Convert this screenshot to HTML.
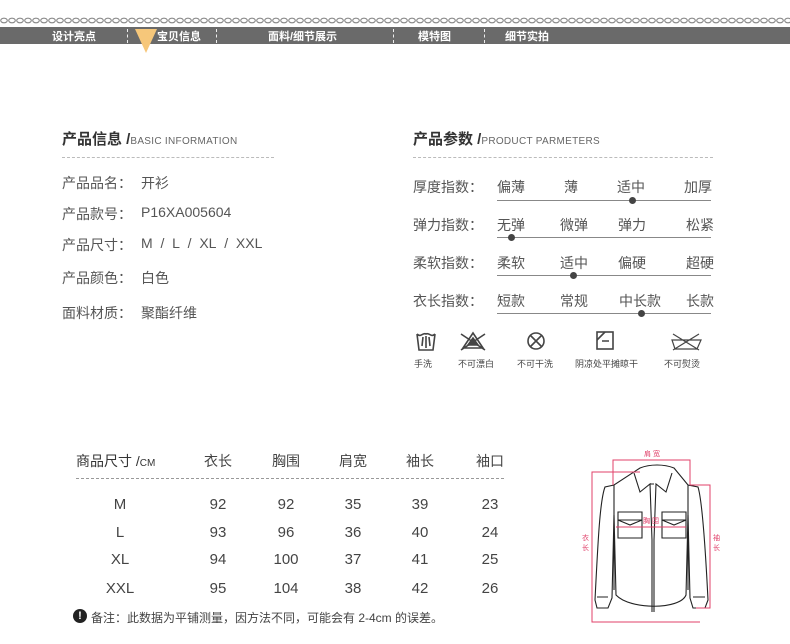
<!DOCTYPE html>
<html><head><meta charset="utf-8"><style>
*{margin:0;padding:0;box-sizing:border-box}
body{width:790px;height:644px;background:#fff;position:relative;overflow:hidden;font-family:"Liberation Sans","Noto Sans CJK SC",sans-serif;color:#555}
.a{position:absolute;white-space:nowrap}
.nav{position:absolute;left:0;top:27px;width:790px;height:17px;background:#6a6a6a}
.nav span{position:absolute;top:1px;color:#fff;font-size:11px;font-weight:bold}
.sep{position:absolute;top:2px;height:14px;border-left:1px dashed #eee}
.h{font-size:15px;font-weight:bold;color:#333}
.h small{font-size:10px;font-weight:normal;color:#666;letter-spacing:.3px}
.dash{position:absolute;height:0;border-top:1px dashed #bbb}
.t{font-size:14px;color:#555}
.line{position:absolute;height:1px;background:#888}
.dot{position:absolute;width:7px;height:7px;border-radius:50%;background:#444}
.c{position:absolute;text-align:center;font-size:15px;color:#444;width:60px}
.ic{position:absolute;font-size:9px;color:#444;text-align:center}
</style></head><body>
<svg class="a" style="left:0;top:16px" width="790" height="9"><defs><pattern id="p" width="8" height="9" patternUnits="userSpaceOnUse"><ellipse cx="4" cy="4.5" rx="3.3" ry="2.3" fill="none" stroke="#888" stroke-width="1.1"/></pattern></defs><rect width="790" height="9" fill="url(#p)"/></svg>
<div class="nav">
<span style="left:52px">设计亮点</span>
<div class="sep" style="left:127px"></div>
<span style="left:157px">宝贝信息</span>
<div class="sep" style="left:216px"></div>
<span style="left:268px">面料/细节展示</span>
<div class="sep" style="left:393px"></div>
<span style="left:418px">模特图</span>
<div class="sep" style="left:484px"></div>
<span style="left:505px">细节实拍</span>
</div>
<svg class="a" style="left:134px;top:27px" width="24" height="27"><polygon points="1,2 23,2 12,26" fill="#f6c77a"/></svg>

<div class="a h" style="left:62px;top:128px">产品信息 /<small>BASIC INFORMATION</small></div>
<div class="dash" style="left:62px;top:157px;width:212px"></div>
<div class="a t" style="left:62px;top:173px">产品品名：</div><div class="a t" style="left:141px;top:173px">开衫</div>
<div class="a t" style="left:62px;top:204px">产品款号：</div><div class="a t" style="left:141px;top:204px">P16XA005604</div>
<div class="a t" style="left:62px;top:235px">产品尺寸：</div><div class="a t" style="left:141px;top:235px">M&nbsp; /&nbsp; L&nbsp; /&nbsp; XL&nbsp; /&nbsp; XXL</div>
<div class="a t" style="left:62px;top:268px">产品颜色：</div><div class="a t" style="left:141px;top:268px">白色</div>
<div class="a t" style="left:62px;top:303px">面料材质：</div><div class="a t" style="left:141px;top:303px">聚酯纤维</div>

<div class="a h" style="left:413px;top:128px">产品参数 /<small>PRODUCT PARMETERS</small></div>
<div class="dash" style="left:413px;top:157px;width:300px"></div>

<div class="a t" style="left:413px;top:177px">厚度指数：</div>
<div class="a t" style="left:497px;top:177px">偏薄</div><div class="a t" style="left:564px;top:177px">薄</div><div class="a t" style="left:617px;top:177px">适中</div><div class="a t" style="left:684px;top:177px">加厚</div>
<div class="line" style="left:497px;top:200px;width:214px"></div><div class="dot" style="left:629px;top:197px"></div>

<div class="a t" style="left:413px;top:215px">弹力指数：</div>
<div class="a t" style="left:497px;top:215px">无弹</div><div class="a t" style="left:560px;top:215px">微弹</div><div class="a t" style="left:618px;top:215px">弹力</div><div class="a t" style="left:686px;top:215px">松紧</div>
<div class="line" style="left:497px;top:237px;width:214px"></div><div class="dot" style="left:508px;top:234px"></div>

<div class="a t" style="left:413px;top:253px">柔软指数：</div>
<div class="a t" style="left:497px;top:253px">柔软</div><div class="a t" style="left:560px;top:253px">适中</div><div class="a t" style="left:618px;top:253px">偏硬</div><div class="a t" style="left:686px;top:253px">超硬</div>
<div class="line" style="left:497px;top:275px;width:214px"></div><div class="dot" style="left:570px;top:272px"></div>

<div class="a t" style="left:413px;top:291px">衣长指数：</div>
<div class="a t" style="left:497px;top:291px">短款</div><div class="a t" style="left:560px;top:291px">常规</div><div class="a t" style="left:619px;top:291px">中长款</div><div class="a t" style="left:686px;top:291px">长款</div>
<div class="line" style="left:497px;top:313px;width:214px"></div><div class="dot" style="left:638px;top:310px"></div>

<svg class="a" style="left:405px;top:328px" width="310" height="28" fill="none" stroke="#444" stroke-width="1.6">
<path d="M12 6 L14 22 H28 L30 6 M12 6 C16 10 18 4 21 6 C24 4 26 10 30 6 M21 8 V20 M18 9 L17 18 M24 9 L25 18"/>
<path d="M58 20 L68 5 L78 20 Z M56 6 L80 22 M80 6 L56 22"/><path d="M63 17 L68 10 L73 17Z" fill="#444"/>
<circle cx="131" cy="13" r="8"/><path d="M125 7 L137 19 M137 7 L125 19"/>
<rect x="192" y="4" width="16" height="17"/><path d="M192 12 L200 4 M197 13 H204"/>
<path d="M267 12 H296 L292 21 H270 Z M268 6 L294 22 M294 6 L268 22" stroke-width="1.2"/>
</svg>
<div class="ic" style="left:414px;top:357px">手洗</div>
<div class="ic" style="left:458px;top:357px">不可漂白</div>
<div class="ic" style="left:517px;top:357px">不可干洗</div>
<div class="ic" style="left:575px;top:357px">阴凉处平摊晾干</div>
<div class="ic" style="left:664px;top:357px">不可熨烫</div>

<div class="a" style="left:76px;top:451px;font-size:14px;color:#333">商品尺寸 /<span style="font-size:10px">CM</span></div>
<div class="c" style="left:188px;top:451px;font-size:14px">衣长</div>
<div class="c" style="left:256px;top:451px;font-size:14px">胸围</div>
<div class="c" style="left:323px;top:451px;font-size:14px">肩宽</div>
<div class="c" style="left:390px;top:451px;font-size:14px">袖长</div>
<div class="c" style="left:460px;top:451px;font-size:14px">袖口</div>
<div class="dash" style="left:76px;top:478px;width:428px;border-color:#999"></div>

<div class="c" style="left:90px;top:496px">M</div><div class="c" style="left:188px;top:496px">92</div><div class="c" style="left:256px;top:496px">92</div><div class="c" style="left:323px;top:496px">35</div><div class="c" style="left:390px;top:496px">39</div><div class="c" style="left:460px;top:496px">23</div>
<div class="c" style="left:90px;top:524px">L</div><div class="c" style="left:188px;top:524px">93</div><div class="c" style="left:256px;top:524px">96</div><div class="c" style="left:323px;top:524px">36</div><div class="c" style="left:390px;top:524px">40</div><div class="c" style="left:460px;top:524px">24</div>
<div class="c" style="left:90px;top:551px">XL</div><div class="c" style="left:188px;top:551px">94</div><div class="c" style="left:256px;top:551px">100</div><div class="c" style="left:323px;top:551px">37</div><div class="c" style="left:390px;top:551px">41</div><div class="c" style="left:460px;top:551px">25</div>
<div class="c" style="left:90px;top:580px">XXL</div><div class="c" style="left:188px;top:580px">95</div><div class="c" style="left:256px;top:580px">104</div><div class="c" style="left:323px;top:580px">38</div><div class="c" style="left:390px;top:580px">42</div><div class="c" style="left:460px;top:580px">26</div>

<div class="a" style="left:73px;top:609px;width:14px;height:14px;border-radius:50%;background:#222;color:#fff;font-size:11px;font-weight:bold;text-align:center;line-height:14px">!</div>
<div class="a" style="left:91px;top:609px;font-size:12px;color:#444">备注：此数据为平铺测量，因方法不同，可能会有 2-4cm 的误差。</div>

<svg class="a" style="left:570px;top:440px" width="170" height="204" fill="none">
<g stroke="#222" stroke-width="1.1">
<path d="M70 28 C80 24 94 24 104 28 L118 45 L128 47 C132 60 135 100 138 160 L135 168 L123 168 L120 158 L118 75 L116 155 C110 170 60 170 46 155 L44 75 L42 158 L38 168 L27 168 L25 160 C28 100 30 60 35 47 L44 45 Z"/>
<path d="M64 33 L70 52 L80 44 L82 100 V172 M102 33 L96 52 L86 44 L84 100 V172 M80 44 L84 44"/>
<path d="M48 72 H72 V98 H48 Z M48 80 H72 M48 80 L60 85 L72 80 M92 72 H116 V98 H92 Z M92 80 H116 M92 80 L104 85 L116 80"/>
<path d="M44 45 V150 M118 45 V150 M27 157 H38 M123 157 H135"/>
</g>
<g stroke="#e0406a" stroke-width="1">
<path d="M43 45 V20 H120 V45 M120 45 H140 V168 H126 M70 32 H22 V182 H130 M46 87 H116"/>
</g>
<g font-size="7" fill="#e0406a" font-family="Liberation Sans,Noto Sans CJK SC,sans-serif">
<text x="74" y="16">肩 宽</text><text x="73" y="83" fill="#e0406a">胸 围</text>
<text x="12" y="100">衣</text><text x="12" y="110">长</text>
<text x="143" y="100">袖</text><text x="143" y="110">长</text>
</g>
</svg>
</body></html>
